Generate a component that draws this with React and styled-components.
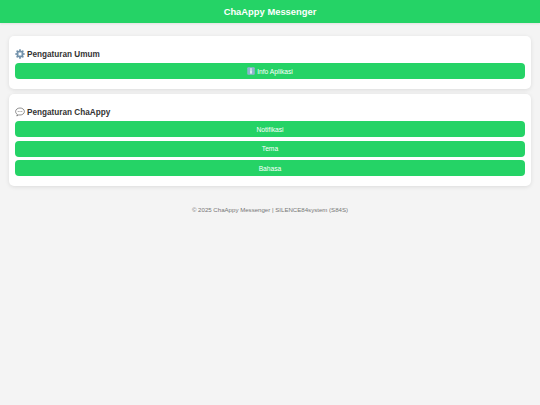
import React from 'react';
import styled, { createGlobalStyle } from 'styled-components';

const GlobalStyle = createGlobalStyle`
  html, body {
    margin: 0;
    padding: 0;
    background: #f4f4f4;
    font-family: "Liberation Sans", Arial, sans-serif;
    color: #333;
  }
`;

const Header = styled.header`
  height: 23px;
  background: #25d366;
  color: #fff;
  font-size: 9.4px;
  font-weight: 700;
  display: flex;
  align-items: center;
  justify-content: center;
  box-shadow: 0 1px 2px rgba(0, 0, 0, 0.08);
`;

const Main = styled.main`
  padding: 13px 9px 0;
  display: flex;
  flex-direction: column;
  gap: 5.5px;
`;

const Card = styled.section`
  background: #fff;
  border-radius: 5px;
  padding: 12px 6px 9.5px;
  box-shadow: 0 1px 4px rgba(0, 0, 0, 0.1);
  display: flex;
  flex-direction: column;
  gap: 3.5px;
`;

const Heading = styled.h2`
  margin: 0 0 -0.5px;
  height: 12px;
  font-size: 8.2px;
  font-weight: 700;
  color: #333;
  display: flex;
  align-items: center;
  gap: 2px;
`;

const Button = styled.button`
  height: 16px;
  padding: 0;
  border: 0;
  border-radius: 4px;
  background: #25d366;
  color: #fff;
  font-family: inherit;
  font-size: 6.7px;
  display: flex;
  align-items: center;
  justify-content: center;
  gap: 2px;
`;

const Footer = styled.footer`
  margin-top: 20.5px;
  text-align: center;
  font-size: 6.1px;
  color: #777;
`;

const GearIcon = () => (
  <svg width="10" height="10" viewBox="0 0 20 20" aria-hidden="true">
    <g fill="#6f8fa8">
      <circle cx="10" cy="10" r="7" />
      {[0, 45, 90, 135, 180, 225, 270, 315].map(a => (
        <rect key={a} x="8.3" y="0.5" width="3.4" height="4.5" rx="0.6" transform={`rotate(${a} 10 10)`} />
      ))}
    </g>
    <circle cx="10" cy="10" r="4.6" fill="#a9bfd0" />
    <circle cx="10" cy="10" r="2.6" fill="#fff" />
  </svg>
);

const ChatIcon = () => (
  <svg width="10" height="10" viewBox="0 0 20 20" aria-hidden="true">
    <path
      d="M10 2C5 2 1.2 5 1.2 9c0 2.4 1.4 4.4 3.5 5.7L3.6 18l4-2.3c.8.2 1.6.3 2.4.3 5 0 8.8-3 8.8-7s-3.800-7-8.800-7z"
      fill="#fff"
      stroke="#555"
      strokeWidth="1.3"
    />
    <g fill="#777">
      <circle cx="6.4" cy="9" r="1" />
      <circle cx="10" cy="9" r="1" />
      <circle cx="13.600" cy="9" r="1" />
    </g>
  </svg>
);

const InfoIcon = () => (
  <svg width="8" height="8" viewBox="0 0 16 16" aria-hidden="true">
    <rect x="0.5" y="0.5" width="15" height="15" rx="2" fill="#8fb4cf" />
    <rect x="6.600" y="2.800" width="2.800" height="2.600" fill="#fff" />
    <rect x="6.600" y="6.600" width="2.800" height="6.600" fill="#fff" />
  </svg>
);

export default function App() {
  return (
    <>
      <GlobalStyle />
      <Header>ChaAppy Messenger</Header>
      <Main>
        <Card>
          <Heading>
            <GearIcon />
            Pengaturan Umum
          </Heading>
          <Button>
            <InfoIcon />
            Info Aplikasi
          </Button>
        </Card>
        <Card>
          <Heading>
            <ChatIcon />
            Pengaturan ChaAppy
          </Heading>
          <Button>Notifikasi</Button>
          <Button>Tema</Button>
          <Button>Bahasa</Button>
        </Card>
      </Main>
      <Footer>© 2025 ChaAppy Messenger | SILENCE84system (S84S)</Footer>
    </>
  );
}
